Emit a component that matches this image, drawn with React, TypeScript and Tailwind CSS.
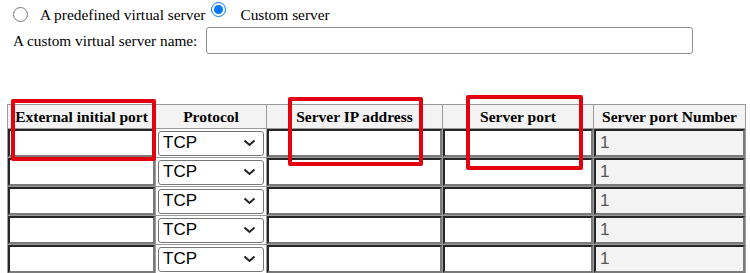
import React from "react";

const Chevron = () => (
  <svg width="13" height="8" viewBox="0 0 13 8" className="pointer-events-none absolute right-[8px] top-1/2 -translate-y-1/2">
    <path d="M1.5 1.5 L6.5 6 L11.5 1.5" fill="none" stroke="#222" strokeWidth="2" />
  </svg>
);

export default function App() {
  const rows = [0, 1, 2, 3, 4, 5];
  return (
    <div className="relative w-[750px] h-[273px] overflow-hidden bg-white text-black" style={{ fontFamily: '"Liberation Serif", "Times New Roman", serif' }}>
      <div className="pl-[13px]">
        <div className="flex items-start pt-[6px] text-[15.4px] leading-[18px]">
          <input type="radio" name="srv" className="w-[15px] h-[15px] m-0 mt-[1px] shrink-0" />
          <span className="ml-[12px]">A predefined virtual server</span>
          <input type="radio" name="srv" defaultChecked className="w-[15px] h-[15px] m-0 ml-[6px] mt-[-4px] shrink-0" />
          <span className="ml-[14px]">Custom server</span>
        </div>
        <div className="flex items-center mt-[3px] text-[15.3px] leading-[18px]">
          <span>A custom virtual server name:</span>
          <input type="text" className="ml-[9px] w-[487px] h-[27px] border border-[#8f8f8f] rounded-[3px] bg-white" />
        </div>
      </div>

      <table className="ml-[7px] mt-[50px] table-fixed border-collapse w-[738px]">
        <colgroup>
          <col className="w-[148px]" />
          <col className="w-[111px]" />
          <col className="w-[176px]" />
          <col className="w-[151px]" />
          <col className="w-[152px]" />
        </colgroup>
        <thead>
          <tr className="h-[24px]">
            {["External initial port", "Protocol", "Server IP address", "Server port", "Server port Number"].map((h) => (
              <th key={h} className="border border-[#9a9a9a] bg-[#f3f3f3] p-0 text-[15.5px] leading-[17px] font-bold text-center whitespace-nowrap">
                {h}
              </th>
            ))}
          </tr>
        </thead>
        <tbody>
          {rows.map((r) => (
            <tr key={r} className="h-[28px]">
              <td className="border border-[#9a9a9a] p-0">
                <input type="text" className="block w-full h-[28px] border-2 [border-style:inset] border-[#7a7a7a] bg-white" />
              </td>
              <td className="border border-[#9a9a9a] px-[2px] py-[1px]">
                <div className="relative">
                  <select
                    defaultValue="TCP"
                    className="appearance-none block w-full h-[25px] border border-[#767676] rounded-[3px] bg-white pl-[4px] text-[17px] leading-[20px] text-black"
                    style={{ fontFamily: '"Liberation Sans", Arial, sans-serif' }}
                  >
                    <option>TCP</option>
                    <option>UDP</option>
                  </select>
                  <Chevron />
                </div>
              </td>
              <td className="border border-[#9a9a9a] p-0">
                <input type="text" className="block w-full h-[28px] border-2 [border-style:inset] border-[#7a7a7a] bg-white" />
              </td>
              <td className="border border-[#9a9a9a] p-0">
                <input type="text" className="block w-full h-[28px] border-2 [border-style:inset] border-[#7a7a7a] bg-white" />
              </td>
              <td className="border border-[#9a9a9a] p-0">
                <input
                  type="text"
                  readOnly
                  defaultValue="1"
                  className="block w-full h-[28px] border-2 [border-style:inset] border-[#7a7a7a] bg-[#f3f3f3] pl-[4px] text-[17px] text-[#555]"
                  style={{ fontFamily: '"Liberation Sans", Arial, sans-serif' }}
                />
              </td>
            </tr>
          ))}
        </tbody>
      </table>

      <div className="pointer-events-none absolute left-[11px] top-[99px] w-[145px] h-[62px] border-[4px] border-[#e3000f] rounded-[2px]" />
      <div className="pointer-events-none absolute left-[288px] top-[97px] w-[135px] h-[69px] border-[4px] border-[#e3000f] rounded-[2px]" />
      <div className="pointer-events-none absolute left-[466px] top-[95px] w-[117px] h-[75px] border-[4px] border-[#e3000f] rounded-[2px]" />
    </div>
  );
}
